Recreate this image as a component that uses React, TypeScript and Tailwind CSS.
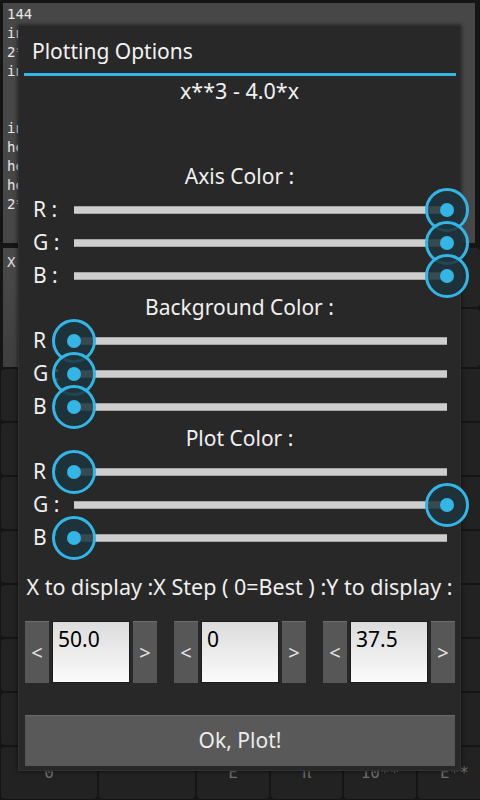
import React from "react";

const sans = { fontFamily: '"Noto Sans", "Open Sans", sans-serif' };
const mono = { fontFamily: '"DejaVu Sans Mono", "Liberation Mono", monospace' };

const historyLines = ["144", "in", "2*", "in", "", "", "in", "he", "he", "he", "2*"];

const keyLabels = ["0", "", "E", "π", "10**", "E**"];

function Thumb({ value }: { value: number }) {
  return (
    <div
      className="absolute top-1/2 h-[45px] w-[45px] -translate-x-1/2 -translate-y-1/2"
      style={{ left: `${value * 100}%` }}
    >
      <svg width="45" height="45" viewBox="0 0 45 45">
        <circle cx="22.5" cy="22.5" r="20.5" fill="rgba(30,52,62,0.86)" stroke="#33b5e5" strokeWidth="3" />
        <circle cx="22.5" cy="22.5" r="7" fill="#33b5e5" />
      </svg>
    </div>
  );
}

function SliderRow({ label, value }: { label: string; value: number }) {
  return (
    <div className="flex h-[33px] items-center">
      <span className="w-[55px] pl-[14px] text-[21px] text-[#f0f0f0]">{label} :</span>
      <div className="relative h-[8px] w-[373px] border-y border-[#a6a6a6] bg-[#cecece]">
        <Thumb value={value} />
      </div>
    </div>
  );
}

function ColorSection({ title, values }: { title: string; values: number[] }) {
  return (
    <div>
      <div className="flex h-[32px] items-center justify-center text-[21px] text-[#f0f0f0]">{title}</div>
      <SliderRow label="R" value={values[0]} />
      <SliderRow label="G" value={values[1]} />
      <SliderRow label="B" value={values[2]} />
    </div>
  );
}

function Stepper({ value }: { value: string }) {
  return (
    <div className="flex h-[62px] gap-[3px]">
      <button className="flex w-[24px] items-center justify-center border-t border-[#6c6c6c] bg-[#575757] text-[20px] text-[#e4e4e4]">
        &lt;
      </button>
      <div className="w-[78px] border border-[#1c1c1c] bg-gradient-to-b from-[#dcdcdc] to-[#fbfbfb] pl-[5px] pt-[3px] text-[21px] leading-[28px] text-black">
        {value}
      </div>
      <button className="flex w-[24px] items-center justify-center border-t border-[#6c6c6c] bg-[#575757] text-[20px] text-[#e4e4e4]">
        &gt;
      </button>
    </div>
  );
}

export default function App() {
  return (
    <div className="relative h-[800px] w-[480px] overflow-hidden bg-[#151515]" style={sans}>
      {/* background calculator screen */}
      <div className="flex h-full flex-col">
        <div className="ml-[3px] mr-[5px] mt-[3px] h-[240px] bg-[#474747] pl-[4px] pt-[2px] text-[14px] leading-[19px] text-[#e8e8e8]" style={mono}>
          {historyLines.map((line, i) => (
            <div key={i} className="h-[19px]">{line}</div>
          ))}
        </div>
        <div className="mt-[5px] flex h-[119px]">
          <div className="ml-[3px] flex-1 bg-gradient-to-b from-[#4a4a4a] to-[#3e3e3e] pl-[4px] pt-[4px] text-[14px] text-[#e0e0e0]" style={mono}>
            X
          </div>
          <div className="ml-[4px] flex w-[80px] flex-col gap-[2px]">
            <div className="flex-1 rounded-sm bg-[#242424]" />
            <div className="flex-1 rounded-sm bg-[#242424]" />
          </div>
        </div>
        <div className="mt-[1px] grid flex-1 grid-cols-[96px_96px_72px_71px_72px_73px] grid-rows-8 gap-[2px] p-[1px]">
          {Array.from({ length: 48 }).map((_, i) => (
            <div
              key={i}
              className="flex items-center justify-center rounded-sm bg-[#222222] text-[16px] text-[#6e6e6e]"
              style={mono}
            >
              {i >= 42 ? keyLabels[i - 42] : ""}
            </div>
          ))}
        </div>
      </div>

      {/* dialog */}
      <div className="absolute left-[18px] top-[25px] flex h-[746px] w-[443px] flex-col border border-[#313131] bg-[#282828] shadow-[0_0_4px_rgba(0,0,0,0.7)]">
        <div className="flex h-[47px] items-center pl-[13px] pt-[5px] text-[21px] text-[#f2f2f2]">Plotting Options</div>
        <div className="ml-[5px] h-[3px] w-[432px] bg-[#33b5e5]" />
        <div className="flex h-[30px] items-center justify-center text-[21.5px] text-[#f0f0f0]">x**3 - 4.0*x</div>
        <div className="h-[55px]" />
        <ColorSection title="Axis Color :" values={[1, 1, 1]} />
        <ColorSection title="Background Color :" values={[0, 0, 0]} />
        <ColorSection title="Plot Color :" values={[0, 1, 0]} />
        <div className="flex h-[67px] items-center justify-center whitespace-nowrap text-[21.5px] text-[#f0f0f0]">
          X to display :X Step ( 0=Best ) :Y to display :
        </div>
        <div className="flex gap-[17px] pl-[6px]">
          <Stepper value="50.0" />
          <Stepper value="0" />
          <Stepper value="37.5" />
        </div>
        <button className="ml-[6px] mt-[32px] h-[51px] w-[430px] border-t border-[#6a6a6a] bg-[#595959] text-[21px] text-[#ececec]">
          Ok, Plot!
        </button>
      </div>
    </div>
  );
}
